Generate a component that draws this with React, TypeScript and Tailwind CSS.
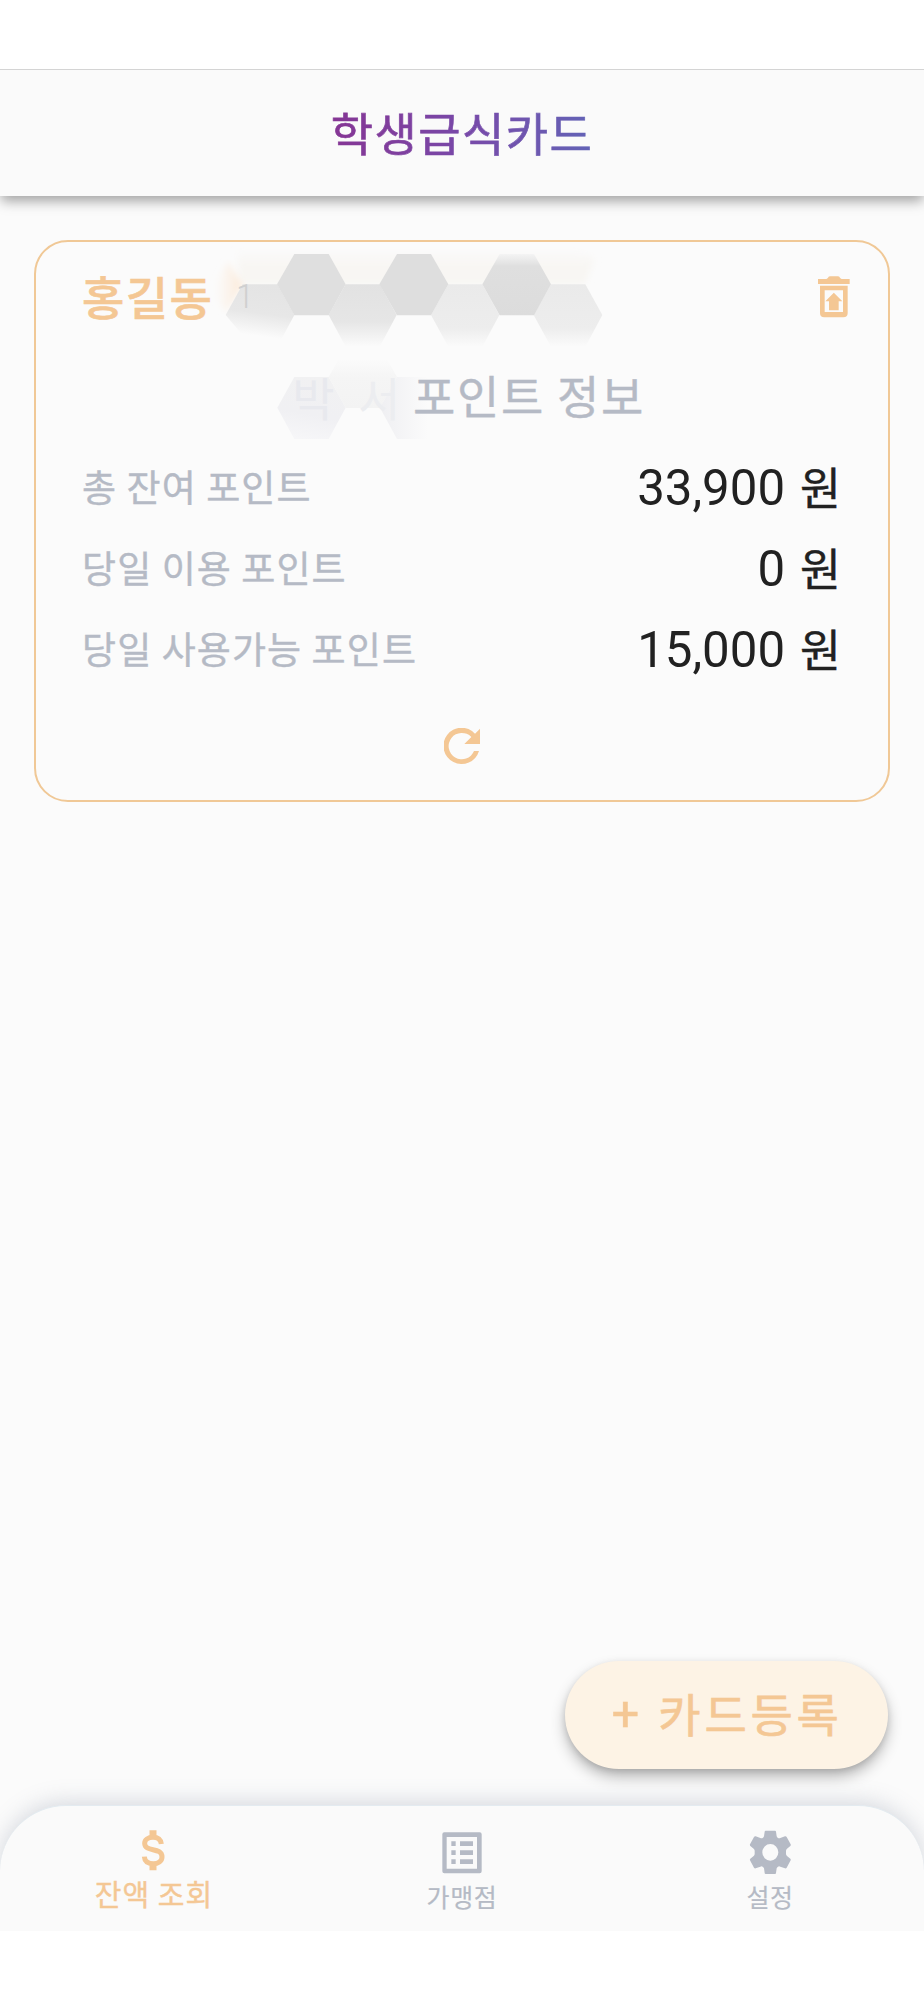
interface PointRow {
  label: string;
  amount: string;
}

const rows: PointRow[] = [
  { label: "총 잔여 포인트", amount: "33,900" },
  { label: "당일 이용 포인트", amount: "0" },
  { label: "당일 사용가능 포인트", amount: "15,000" },
];

function RestoreTrashIcon() {
  return (
    <svg width="32" height="42" viewBox="0 0 96 126" fill="currentColor">
      <path d="M0 9h25q3-1 5-4 2-4 7-4h22q5 0 7 4 2 3 5 4h24v15H0z" />
      <path fillRule="evenodd" d="M6 29h83v82q0 13-13 13H19q-13 0-13-13zM20 43v65h55V43z" />
      <path d="M47.500 50 73 76H62v27H33V76H22z" />
    </svg>
  );
}

function RefreshIcon() {
  return (
    <svg width="36" height="37" viewBox="0 0 108 111" fill="currentColor">
      <path d="M93 17A54.500 54.500 0 1 0 105 69H90A39.500 39.500 0 1 1 82 27L61 48h47V2z" />
    </svg>
  );
}

function DollarIcon() {
  return (
    <svg width="24" height="41" viewBox="0 0 72 123" fill="none" stroke="currentColor">
      <path strokeWidth="15" d="M61 42C59 27 49 22 36 22 21 22 11 29 11 40 11 68 63 50 63 81 63 94 51 101 37 101 21 101 11 94 10 80" />
      <path strokeWidth="21" d="M36 1v21M36 101v20" />
    </svg>
  );
}

function ListIcon() {
  return (
    <svg width="40" height="42" viewBox="0 0 120 126" fill="currentColor">
      <path fillRule="evenodd" d="M7 1h106q6 0 6 6v111q0 6-6 6H7q-6 0-6-6V7q0-6 6-6zM14 15v95h91V15z" />
      <path d="M28 28h13v14H28zM54 28h39v14H54zM28 55h13v14H28zM54 55h39v14H54zM28 82h13v14H28zM54 82h39v14H54z" />
    </svg>
  );
}

function GearIcon() {
  return (
    <svg width="42" height="45" viewBox="0 0 126 135" fill="currentColor">
      <path
        fillRule="evenodd"
        d="M50 2h28q3 0 3 3l2 14q1 3 4 5t7 0l14-5q3-1 5 2l12 22q1 3-1 5l-10 8q-3 3-3 6v10q0 3 3 6l10 8q2 2 1 5l-12 22q-2 3-5 2l-14-5q-4-2-7 0t-4 5l-2 14q0 3-3 3H50q-3 0-3-3l-2-14q-1-3-4-5t-7 0l-14 5q-3 1-5-2L3 91q-1-3 1-5l10-8q3-3 3-6V62q0-3-3-6L4 48q-2-2-1-5l12-22q2-3 5-2l14 5q4 2 7 0t4-5l2-14q0-3 3-3zM64 42a24 25 0 1 0 0 50 24 25 0 1 0 0-50z"
      />
    </svg>
  );
}

// Hexagon mosaic hiding the card number and the owner's name
function Mosaic() {
  return (
    <svg className="absolute left-[164px] top-[-12px]" width="440" height="230" viewBox="0 0 1320 690">
      <defs>
        <linearGradient id="fadeDown" x1="0" y1="0" x2="0" y2="1">
          <stop offset="0" stopColor="#e2e2e2" />
          <stop offset="0.6" stopColor="#e6e6e6" />
          <stop offset="1" stopColor="#fbfbfb" />
        </linearGradient>
        <linearGradient id="fadeDownLight" x1="0" y1="0" x2="0" y2="1">
          <stop offset="0" stopColor="#eaeaea" />
          <stop offset="0.7" stopColor="#ededed" />
          <stop offset="1" stopColor="#fbfbfb" />
        </linearGradient>
        <linearGradient id="fadeFirst" x1="0.45" y1="0" x2="0.3" y2="0.9">
          <stop offset="0" stopColor="#e4e4e4" />
          <stop offset="0.55" stopColor="#e7e7e7" />
          <stop offset="1" stopColor="#fbfbfb" />
        </linearGradient>
        <linearGradient id="fadeUp" x1="0" y1="0" x2="0" y2="1">
          <stop offset="0" stopColor="#f4f4f4" />
          <stop offset="0.2" stopColor="#dfdfdf" />
          <stop offset="1" stopColor="#dcdcdc" />
        </linearGradient>
        <linearGradient id="warm" x1="0" y1="0" x2="0" y2="1">
          <stop offset="0" stopColor="#f8f6f3" stopOpacity="0" />
          <stop offset="0.5" stopColor="#f8f6f3" />
          <stop offset="1" stopColor="#f8f6f3" />
        </linearGradient>
        <linearGradient id="peach" x1="0" y1="0" x2="1" y2="0">
          <stop offset="0" stopColor="#fbeee2" stopOpacity="0" />
          <stop offset="1" stopColor="#fce9d6" />
        </linearGradient>
        <linearGradient id="nameLeft" x1="0.6" y1="0" x2="0.4" y2="1">
          <stop offset="0" stopColor="#f1f1f2" />
          <stop offset="0.6" stopColor="#f0f0f3" />
          <stop offset="1" stopColor="#f6f6f8" />
        </linearGradient>
        <linearGradient id="nameTop" x1="0" y1="0" x2="0" y2="1">
          <stop offset="0.2" stopColor="#fbfbfb" />
          <stop offset="0.5" stopColor="#f5f5f5" />
          <stop offset="1" stopColor="#f3f3f3" />
        </linearGradient>
        <linearGradient id="nameRight" x1="0" y1="0" x2="1" y2="0">
          <stop offset="0" stopColor="#efeff2" />
          <stop offset="0.7" stopColor="#fbfbfb" />
        </linearGradient>
        <filter id="soft" x="-20%" y="-20%" width="140%" height="140%">
          <feGaussianBlur stdDeviation="10" />
        </filter>
      </defs>
      <path d="M110 55H1130L1185 85 1155 163H120z" fill="url(#warm)" filter="url(#soft)" />
      <path d="M85 95 128 165 82 245Q40 220 45 160z" fill="url(#peach)" filter="url(#soft)" />
      <path d="M128 163h104l51 92-40 75H140L77 255z" fill="url(#fadeFirst)" />
      <path d="M437 163h102l51 92-51 95H437l-51-95z" fill="url(#fadeDown)" />
      <path d="M745 163h102l51 92-51 95H745l-52-95z" fill="url(#fadeDownLight)" />
      <path d="M1053 163h103l51 92-51 95h-103l-52-95z" fill="url(#fadeDownLight)" />
      <path d="M283 72h103l51 91-51 93H283l-52-93z" fill="#dfdfdf" />
      <path d="M591 72h102l52 91-52 93H591l-53-93z" fill="#dedede" />
      <path d="M899 72h103l51 91-51 93H899l-52-93z" fill="url(#fadeUp)" />
      <text x="108" y="234" className="font-['Roboto'] text-[98px] font-light" fill="#d0d0d0">1</text>
      <path d="M283 441h103l51 92-51 94H283l-51-94z" fill="url(#nameLeft)" />
      <path d="M437 350h103l51 91-51 93H437l-51-93z" fill="url(#nameTop)" />
      <path d="M591 441h102l51 92-51 94H591l-51-94z" fill="url(#nameRight)" />
      <text x="277" y="557" className="font-['Noto_Sans_CJK_KR'] text-[138px]" fill="#e8e9ee">박</text>
      <text x="474" y="557" className="font-['Noto_Sans_CJK_KR'] text-[138px]" fill="#ecedf0">서</text>
    </svg>
  );
}

export default function App() {
  return (
    <div className="flex h-[2000px] w-[924px] flex-col overflow-hidden bg-white font-['Noto_Sans_CJK_KR',sans-serif]">
      <div className="h-[69px] shrink-0" />
      <header className="relative z-10 flex h-[127px] shrink-0 items-center justify-center border-t border-[#d4d4d4] bg-[#fafafa] pb-[4px] shadow-[0_6px_12px_-1px_rgba(0,0,0,0.36)] [clip-path:inset(0_0_-30px_0)]">
        <h1 className="bg-linear-to-r from-[#853594] via-[#7848a8] to-[#6263b6] bg-clip-text text-[46px] leading-[70px] tracking-[1.4px] text-transparent [-webkit-text-stroke:0.7px]">
          학생급식카드
        </h1>
      </header>

      <main className="flex flex-1 flex-col bg-[#fbfbfb] px-[34px] pt-[44px]">
        <section className="relative h-[562px] rounded-[34px] border-2 border-[#f0c896] px-[46px] text-[#b5bac5]">
          <div className="flex h-[112px] items-center justify-between text-[#f4c794]">
            <span className="pb-[7px] text-[46px] leading-[70px] font-medium tracking-[1.4px] [-webkit-text-stroke:0.6px]">
              홍길동
            </span>
            <div className="mr-[-8px] pb-[3px]">
              <RestoreTrashIcon />
            </div>
          </div>
          <Mosaic />
          <p className="relative mt-[5px] ml-[331px] text-[46px] leading-[70px] tracking-[1.7px] [-webkit-text-stroke:0.4px]">
            포인트 정보
          </p>
          <div className="mt-[18px]">
            {rows.map((row) => (
              <div key={row.label} className="flex h-[81px] items-center justify-between">
                <span className="pb-[1px] text-[37px] tracking-[1.1px] [-webkit-text-stroke:0.4px]">{row.label}</span>
                <span className="flex items-baseline pt-[2px] text-[#212121]">
                  <span className="font-['Roboto'] text-[49.2px]">{row.amount}</span>
                  <span className="mr-[1px] ml-[15px] text-[44.5px] [-webkit-text-stroke:0.4px]">원</span>
                </span>
              </div>
            ))}
          </div>
          <div className="mt-[38px] flex justify-center text-[#f4c794]">
            <RefreshIcon />
          </div>
        </section>

        <button className="mt-auto mr-[2px] mb-[36px] flex h-[108px] w-[323px] items-center justify-center self-end rounded-full bg-[#fdf3e5] pl-[1px] text-[#f4c794] shadow-[0_8px_15px_-1px_rgba(0,0,0,0.3),0_2px_6px_rgba(0,0,0,0.1)]">
          <span className="pb-[2px] font-['Roboto'] text-[49px] [-webkit-text-stroke:0.4px]">+</span>
          <span className="ml-[19px] pb-[6px] text-[46px] leading-[70px] tracking-[3.7px] [-webkit-text-stroke:0.7px]">
            카드등록
          </span>
        </button>
      </main>

      <div className="h-[126px] shrink-0 bg-[#fbfbfb]">
        <nav className="flex h-full rounded-t-[66px] border-t border-[#e3ebf0] bg-[#fafafa] shadow-[0_-3px_22px_rgba(130,140,160,0.3)]">
          <div className="flex w-[306px] flex-col items-center pt-[24px] text-[#f4c794]">
            <DollarIcon />
            <span className="pl-[2px] text-[29px] leading-[44px] tracking-[1.1px] [-webkit-text-stroke:0.4px]">
              잔액 조회
            </span>
          </div>
          <div className="flex w-[312px] flex-col items-center pt-[26px] text-[#b5bac5]">
            <ListIcon />
            <span className="mt-[3px] text-[25px] leading-[38px] tracking-[0.6px] [-webkit-text-stroke:0.2px]">가맹점</span>
          </div>
          <div className="flex w-[304px] flex-col items-center pt-[24px] text-[#b5bac5]">
            <GearIcon />
            <span className="mt-[2px] text-[25px] leading-[38px] tracking-[0.6px] [-webkit-text-stroke:0.2px]">설정</span>
          </div>
        </nav>
      </div>
      <div className="h-[69px] shrink-0 bg-white" />
    </div>
  );
}
